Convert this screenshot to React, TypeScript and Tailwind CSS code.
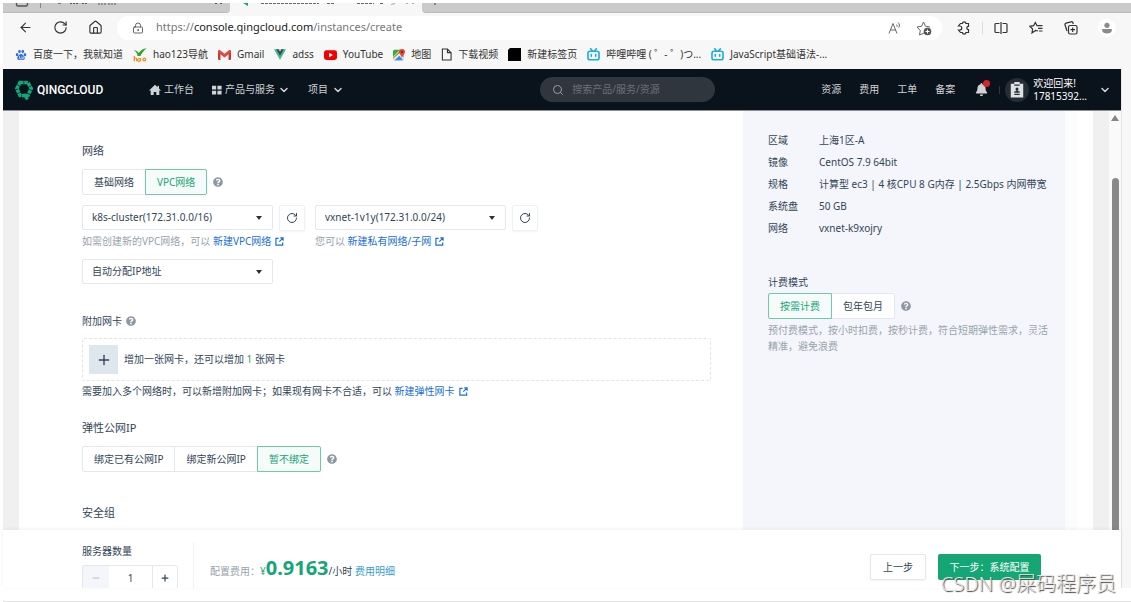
import { type ReactNode } from "react";
import {
  ArrowLeft,
  ChevronDown,
  House,
  LockKeyhole,
  Minus,
  Plus,
  RotateCw,
  Search,
} from "lucide-react";
import { FaBell, FaQuestionCircle } from "react-icons/fa";

const focus = "outline-none focus-visible:ring-1 focus-visible:ring-[#15a675]";

const BaiduIcon = () => (
  <svg viewBox="0 0 16 16" className="size-3" fill="#2f6fe4">
    <ellipse cx="2.8" cy="7.6" rx="1.7" ry="2.2" />
    <ellipse cx="6" cy="3.2" rx="1.7" ry="2.3" />
    <ellipse cx="10.4" cy="3.2" rx="1.7" ry="2.3" />
    <ellipse cx="13.3" cy="7.6" rx="1.7" ry="2.2" />
    <path d="M8 6.8c2 0 2.8 1.8 4 3 1.6 1.6 1.4 4.7-1 4.9-1.2 0-1.9-.3-3-.3s-1.8.3-3 .3c-2.400-.2-2.600-3.300-1-4.900 1.200-1.200 2-3 4-3z" />
    <path d="M6 9.5v3.200h1.700M9.200 10v2.700H11V10" fill="none" stroke="#fff" strokeWidth=".9" />
  </svg>
);

const HaoIcon = () => (
  <svg viewBox="0 0 16 16" className="size-[14px]">
    <path d="M1 2.500c2.500 0 4.500 1.300 5.600 3.300C8.500 2.500 11.500 .5 15.500 .2 13 2 10.500 5 8.500 9H5.200C4.800 5.800 3.200 3.800 1 2.500z" fill="#2fa52c" />
    <path
      d="M1.500 9v6M1.500 12.200c1-1.200 2.700-1 2.700.6V15M8.600 11.500V15M14.500 13.200a1.600 1.600 0 1 1-3.200 0 1.600 1.600 0 0 1 3.200 0M8.500 13.200a1.600 1.600 0 1 1-3.100 0 1.600 1.600 0 0 1 3.100 0"
      fill="none"
      stroke="#f08a24"
      strokeWidth="1.400"
    />
  </svg>
);

const GmailIcon = () => (
  <svg viewBox="0 0 16 12" className="h-[10px] w-[13px]">
    <path d="M0 1h3v11H1a1 1 0 0 1-1-1z" fill="#c5372c" />
    <path d="M13 1h3v10a1 1 0 0 1-1 1h-2z" fill="#c5372c" />
    <path d="M0 1.500C0 0 1.800-.5 3 .5l5 4 5-4c1.200-1 3-.5 3 1V3L8 9 0 3z" fill="#e2483d" />
  </svg>
);

const VueIcon = () => (
  <svg viewBox="0 0 16 14" className="h-[11px] w-3">
    <path d="M0 0h16L8 14z" fill="#41b883" />
    <path d="M3.200 0h9.600L8 8.500z" fill="#35495e" />
    <path d="M6.200 0h3.600L8 3z" fill="#f7f7f7" />
  </svg>
);

const YoutubeIcon = () => (
  <svg viewBox="0 0 16 12" className="h-[10px] w-[13px]">
    <rect width="16" height="12" rx="3" fill="#f00000" />
    <path d="M6.300 3.300v5.400L11 6z" fill="#fff" />
  </svg>
);

const MapIcon = () => (
  <svg viewBox="0 0 16 16" className="size-3">
    <rect x="0" y="1" width="14" height="14" rx="2" fill="#34a853" />
    <path d="M0 13 9 5l5 6v2a2 2 0 0 1-2 2H2a2 2 0 0 1-2-2z" fill="#e8e8e8" />
    <path d="M2 15 8.500 9l5 6z" fill="#4285f4" />
    <path d="m0 10 8-8h2L0 12z" fill="#fbcf3b" />
    <path d="M12 0a4 4 0 0 1 4 4c0 2.500-3 3.800-4 8-1-4.200-4-5.500-4-8a4 4 0 0 1 4-4z" fill="#e94235" />
    <circle cx="12" cy="4" r="1.300" fill="#8a1d15" />
  </svg>
);

const PageIcon = () => (
  <svg viewBox="0 0 12 14" className="h-[13px] w-[11px]" fill="none" stroke="#333" strokeWidth="1.200">
    <path d="M1.500 1H7l4 4v8H1.500zM7 1v4h4" />
  </svg>
);

const BlackIcon = () => (
  <svg viewBox="0 0 13 13" className="size-[13px]">
    <path d="M2 0h11v13H0V2z" fill="#000" />
  </svg>
);

const BiliIcon = () => (
  <svg viewBox="0 0 16 16" className="size-[13px]" fill="none" stroke="#1fade0" strokeWidth="2" strokeLinecap="round">
    <rect x="1.200" y="4" width="13.600" height="10.500" rx="2.500" />
    <path d="m4.500 1 2 2.500M11.500 1l-2 2.500M5.300 8v2M10.700 8v2" />
  </svg>
);

const QingLogo = () => (
  <svg viewBox="0 0 18 22" className="h-[22px] w-[18px]" fill="none" stroke="#12a678" strokeWidth="3.600">
    <path d="m5 3.500 8 0 3.200 6L13 16.500H5L1.800 9.500z" strokeDasharray="3.600 .6" />
    <path d="m9 15 3.500 5.500" strokeWidth="3.200" />
  </svg>
);

const ExternalIcon = () => (
  <svg viewBox="0 0 10 10" className="size-[9px]" fill="none" stroke="currentColor" strokeWidth="1.300">
    <path d="M4 1.500H1v7.500h7.500V6M5.800 1H9v3.200M9 1 4.800 5.200" />
  </svg>
);

const bookmarks = [
  { label: "百度一下，我就知道", icon: <BaiduIcon /> },
  { label: "hao123导航", icon: <HaoIcon /> },
  { label: "Gmail", icon: <GmailIcon /> },
  { label: "adss", icon: <VueIcon /> },
  { label: "YouTube", icon: <YoutubeIcon /> },
  { label: "地图", icon: <MapIcon /> },
  { label: "下载视频", icon: <PageIcon /> },
  { label: "新建标签页", icon: <BlackIcon /> },
  { label: "哔哩哔哩 ( ゜- ゜)つ...", icon: <BiliIcon /> },
  { label: "JavaScript基础语法-...", icon: <BiliIcon /> },
];

const summary = [
  { label: "区域", value: "上海1区-A" },
  { label: "镜像", value: "CentOS 7.9 64bit" },
  { label: "规格", value: "计算型 ec3 | 4 核CPU 8 G内存 | 2.5Gbps 内网带宽" },
  { label: "系统盘", value: "50 GB" },
  { label: "网络", value: "vxnet-k9xojry" },
];

// only the lower edge of the tab strip is in view
const TabStrip = () => (
  <div className="flex h-[10px] overflow-hidden bg-[#f7f7f7]">
    <div className="w-[227px] rounded-br-sm border-b border-[#bbb] bg-[#cacaca]">
      <svg viewBox="0 0 227 9" className="h-[9px] w-[227px]" fill="none" stroke="#555">
        <path d="M13.500 0v1.500a1.500 1.500 0 0 0 1.500 1.500h8a1.500 1.500 0 0 0 1.500-1.500V0" strokeWidth="1.400" />
        <path d="M37.500 0v5" stroke="#888" />
        <path d="M67 .5h9M79 .5h5M95 1h8M105 1h9M212 .5h2M217 .5h2" strokeDasharray="2 1" />
        <path d="M55 .5h3" stroke="#3b82d8" />
      </svg>
    </div>
    <div className="w-[192px]">
      <svg viewBox="0 0 192 9" className="h-[9px] w-[192px]" fill="none" stroke="#666">
        <path d="M13 0h5v3z" fill="#12a678" stroke="none" />
        <path d="M31 .5h58M97 .5h7M127 .5h17M150 .5h3" strokeDasharray="3 1" />
        <path d="M161 1.500l4-1M176 .5h2M182 .5h2" stroke="#aaa" />
      </svg>
    </div>
    <div className="flex-1 rounded-bl-sm border-b border-[#bbb] bg-[#cacaca]">
      <svg viewBox="0 0 20 9" className="h-[9px] w-5" stroke="#444">
        <path d="M13 0v2" />
      </svg>
    </div>
  </div>
);

const Browser = () => (
  <div className="shrink-0 bg-[#f7f7f7] text-[#333]">
    <TabStrip />
    <div className="flex h-[29px] items-center pr-[15px] pl-[15px]">
      <div className="flex w-[99px] items-center gap-5">
        <button type="button" aria-label="后退" className={focus}>
          <ArrowLeft className="size-[15px]" strokeWidth={1.8} />
        </button>
        <button type="button" aria-label="刷新" className={focus}>
          <RotateCw className="size-[15px]" strokeWidth={1.8} />
        </button>
        <button type="button" aria-label="主页" className={focus}>
          <House className="size-[15px]" strokeWidth={1.8} />
        </button>
      </div>
      <div className="flex h-6 flex-1 items-center rounded-full bg-white pr-[10px] pl-[15px]">
        <LockKeyhole className="size-3 text-[#555]" strokeWidth={1.8} />
        <p className="ml-3 flex-1 text-[11px] text-[#777]">
          https://<span className="text-[#222]">console.qingcloud.com</span>/instances/create
        </p>
        <div className="flex items-center gap-[14px] text-[#666]">
          <svg viewBox="0 0 14 14" className="size-[14px]" fill="none" stroke="currentColor">
            <path d="m1 12.500 4-10 4 10M2.500 9h5M8.500 3.500c.8.700.8 1.600.4 2.500M10 1.500c1.600 1.400 1.800 3.500.8 5.200" />
          </svg>
          <svg viewBox="0 0 16 16" className="size-4" fill="none" stroke="currentColor">
            <path d="M8 13 3.500 15l.8-4.500L1 7l4.500-.7L7.500 2l2 4.300 4.500.7" />
            <circle cx="11.500" cy="11.500" r="3.800" fill="#555" stroke="none" />
            <path d="M11.500 9.500v4M9.500 11.500h4" stroke="#fff" />
          </svg>
        </div>
      </div>
      <div className="ml-[15px] flex items-center text-[#333]">
        <svg viewBox="0 0 14 14" className="size-[14px]" fill="none" stroke="currentColor" strokeWidth="1.200">
          <path d="M3.500 2.500h2a1.700 1.700 0 0 1 3.400 0h2.600v2.800a1.700 1.700 0 0 0 0 3.400v2.800H8.900a1.700 1.700 0 0 1-3.400 0h-2L1.500 9h1.300a2 2 0 0 0 0-4H1.500z" />
        </svg>
        <span className="mx-[11px] h-3 w-px bg-[#ddd]" />
        <svg viewBox="0 0 14 14" className="size-[14px]" fill="none" stroke="currentColor" strokeWidth="1.200">
          <path d="M5.500 2.500H2a1 1 0 0 0-1 1v7a1 1 0 0 0 1 1h3.500M8.500 2.500H12a1 1 0 0 1 1 1v7a1 1 0 0 1-1 1H8.500M7 1v12" />
        </svg>
        <svg viewBox="0 0 14 14" className="ml-[21px] size-[14px]" fill="none" stroke="currentColor" strokeWidth="1.200">
          <path d="m9 10-2.500-.5L3 12l.6-4L1 5.300l3.600-.6L6.300 1.500 8 4.700h5.500M9 7.300h4.500M10 10h3.500" />
        </svg>
        <svg viewBox="0 0 14 14" className="ml-[21px] size-[14px]" fill="none" stroke="currentColor" strokeWidth="1.200">
          <rect x="4.500" y="4.500" width="8.500" height="8.500" rx="1.500" />
          <path d="M8.700 6.500v4.500M6.500 8.700H11M3 10 1 3.800a1.500 1.500 0 0 1 1-1.700L7 .8a1.500 1.500 0 0 1 1.900 1L9.300 3" />
        </svg>
        <span className="ml-5 flex size-[18px] items-center justify-center rounded-full bg-white">
          <svg viewBox="0 0 12 12" className="size-3" fill="#8a8a8a">
            <circle cx="6" cy="3.300" r="2.600" />
            <path d="M1.200 7h9.600v1.500c0 4-9.600 4-9.600 0z" />
          </svg>
        </span>
      </div>
    </div>
    <nav className="flex h-[27px] items-center gap-[10px] pb-[2px] pl-3">
      {bookmarks.map((item) => (
        <a key={item.label} href="#" className="flex items-center gap-[6px] text-[10px] whitespace-nowrap">
          {item.icon}
          {item.label}
        </a>
      ))}
    </nav>
  </div>
);

const Header = () => (
  <header className="flex h-[41px] shrink-0 items-center bg-[#0a121b] pr-[10px] pl-3 text-[10px] text-[#d0d3d6]">
    <a href="#" className="flex w-[134px] items-center gap-1 text-white">
      <QingLogo />
      <span className="font-[Roboto,sans-serif] text-xs leading-4 font-medium">QINGCLOUD</span>
    </a>
    <nav className="flex items-center gap-[18px]">
      <a href="#" className="flex items-center gap-[3px]">
        <svg viewBox="0 0 12 12" className="size-3" fill="currentColor">
          <path d="M6 .8 0 6.500h1.700V11h3V8h2.600v3h3V6.500H12L10 4.600V1.800H8.600v1.500z" />
        </svg>
        工作台
      </a>
      <a href="#" className="flex items-center gap-[3px]">
        <svg viewBox="0 0 12 12" className="size-[10px]" fill="currentColor">
          <path d="M0 1h5v4.500H0zM6.500 1h5v4.500h-5zM0 7h5v4.500H0zM6.500 7h5v4.500h-5z" />
        </svg>
        产品与服务
        <ChevronDown className="size-3" strokeWidth={3} />
      </a>
      <a href="#" className="flex items-center gap-1">
        项目
        <ChevronDown className="size-3" strokeWidth={3} />
      </a>
    </nav>
    <label className="mr-[106px] ml-auto flex h-[25px] w-[175px] items-center gap-2 rounded-full bg-[#30363e] px-3 text-[#9a9ea4]">
      <Search className="size-3 shrink-0" />
      <input type="search" aria-label="搜索" placeholder="搜索产品/服务/资源" className="w-full bg-transparent outline-none placeholder:text-[#6b7178]" />
    </label>
    <nav className="flex items-center gap-[18px]">
      <a href="#">资源</a>
      <a href="#">费用</a>
      <a href="#">工单</a>
      <a href="#">备案</a>
    </nav>
    <button type="button" aria-label="通知" className="relative ml-5">
      <FaBell className="size-[13px]" />
      <span className="absolute -top-[3px] -right-[2px] size-[7px] rounded-full bg-[#d8232a]" />
    </button>
    <span className="mr-[5px] ml-[11px] h-2 w-px bg-[#30363e]" />
    <span className="flex size-6 items-center justify-center rounded-full bg-[#262d36]">
      <svg viewBox="0 0 14 18" className="h-4 w-[14px]" fill="#dfe1e3">
        <path d="M0 2h4V0h6v2h4v15.500H0z" />
        <path d="M4 3.500h6M4 14h6" stroke="#262d36" strokeWidth="1.500" />
        <circle cx="7" cy="8" r="1.700" fill="#262d36" />
        <path d="M6.200 9h1.600v1.500H10V12H4v-1.500h2.200z" fill="#262d36" />
      </svg>
    </span>
    <p className="ml-1 leading-[13px] text-white">
      欢迎回来!
      <br />
      17815392...
    </p>
    <ChevronDown className="ml-3 size-3" strokeWidth={3} />
  </header>
);

const Help = () => <FaQuestionCircle className="size-[10px] text-[#8d98a3]" />;

const Segmented = ({ name, items, active }: { name: string; items: string[]; active: string }) => (
  <div className="flex items-center gap-[6px]">
    <div className="flex">
      {items.map((item) => (
        <label
          key={item}
          className="-ml-px flex h-[26px] cursor-pointer items-center border border-[#e3e8ee] bg-white px-[11px] first:ml-0 first:rounded-l-xs last:rounded-r-xs has-checked:z-10 has-checked:border-[#6fc9aa] has-checked:bg-[#f5fbf9] has-checked:text-[#15a675]"
        >
          <input type="radio" name={name} defaultChecked={item === active} className="sr-only" />
          {item}
        </label>
      ))}
    </div>
    <Help />
  </div>
);

const Dropdown = ({ label, value }: { label: string; value: string }) => (
  <div className="relative w-[191px]">
    <select
      aria-label={label}
      className={`h-[25px] w-full appearance-none rounded-xs border border-[#e3e8ee] bg-white px-[9px] ${focus}`}
    >
      <option>{value}</option>
    </select>
    <svg viewBox="0 0 6 4" className="pointer-events-none absolute top-[11px] right-[11px] h-1 w-[6px]" fill="#25323f">
      <path d="M0 0h6L3 4z" />
    </svg>
  </div>
);

const Refresh = () => (
  <button
    type="button"
    aria-label="刷新"
    className="flex size-[26px] items-center justify-center rounded-xs border border-[#eef1f5] bg-white shadow-xs"
  >
    <RotateCw className="size-3" />
  </button>
);

const NewLink = ({ children }: { children: ReactNode }) => (
  <a href="#" className="inline-flex items-center gap-1 text-[#1a6fd8]">
    {children}
    <ExternalIcon />
  </a>
);

const NetworkForm = () => (
  <main className="flex-1 overflow-hidden bg-white pt-[31px] pl-[63px]">
    <h2 className="text-[11px] leading-[18px]">网络</h2>
    <div className="mt-[9px]">
      <Segmented name="network" items={["基础网络", "VPC网络"]} active="VPC网络" />
    </div>
    <div className="mt-[10px] flex gap-[10px]">
      <div>
        <div className="flex gap-[6px]">
          <Dropdown label="VPC网络" value="k8s-cluster(172.31.0.0/16)" />
          <Refresh />
        </div>
        <p className="mt-px leading-[18px] whitespace-nowrap text-[#98a3ae]">
          如需创建新的VPC网络，可以 <NewLink>新建VPC网络</NewLink>
        </p>
      </div>
      <div>
        <div className="flex gap-[6px]">
          <Dropdown label="私有网络" value="vxnet-1v1y(172.31.0.0/24)" />
          <Refresh />
        </div>
        <p className="mt-px leading-[18px] whitespace-nowrap text-[#98a3ae]">
          您可以 <NewLink>新建私有网络/子网</NewLink>
        </p>
      </div>
    </div>
    <div className="mt-[9px]">
      <Dropdown label="IP地址" value="自动分配IP地址" />
    </div>
    <h3 className="mt-7 flex items-center gap-1 leading-[18px]">
      附加网卡 <Help />
    </h3>
    <div className="mt-2 mr-8 flex h-[43px] items-center gap-[6px] rounded-xs border border-dashed border-[#dfe5ec] px-[6px]">
      <button type="button" aria-label="增加网卡" className="flex size-[29px] items-center justify-center bg-[#dfe7ee]">
        <Plus className="size-4" />
      </button>
      <p>
        增加一张网卡，还可以增加 <span className="text-[#15a675]">1</span> 张网卡
      </p>
    </div>
    <p className="mt-px leading-[18px]">
      需要加入多个网络时，可以新增附加网卡；如果现有网卡不合适，可以 <NewLink>新建弹性网卡</NewLink>
    </p>
    <h2 className="mt-[19px] text-[11px] leading-[18px]">弹性公网IP</h2>
    <div className="mt-[9px]">
      <Segmented name="eip" items={["绑定已有公网IP", "绑定新公网IP", "暂不绑定"]} active="暂不绑定" />
    </div>
    <h2 className="mt-8 text-[11px] leading-[18px]">安全组</h2>
  </main>
);

const Sidebar = () => (
  <aside className="w-[322px] shrink-0 bg-[#f4f6fb] pt-5 pr-4 pl-[25px]">
    <dl className="grid grid-cols-[51px_1fr] gap-y-1 leading-[18px]">
      {summary.map((row) => (
        <div key={row.label} className="contents">
          <dt>{row.label}</dt>
          <dd className="whitespace-nowrap">{row.value}</dd>
        </div>
      ))}
    </dl>
    <h3 className="mt-9 mb-[2px] leading-[18px]">计费模式</h3>
    <Segmented name="billing" items={["按需计费", "包年包月"]} active="按需计费" />
    <p className="mt-[3px] leading-4 text-[#98a3ae]">
      预付费模式，按小时扣费，按秒计费，符合短期弹性需求，灵活精准，避免浪费
    </p>
  </aside>
);

const Footer = () => (
  <footer className="z-10 flex h-[58px] shrink-0 overflow-hidden bg-white pt-3 pr-20 pl-[79px] text-[10px] shadow-[0_-1px_4px_rgba(0,0,0,0.06)]">
    <div className="w-[112px] border-r border-[#edf2f5]">
      <label htmlFor="count" className="block leading-[18px]">服务器数量</label>
      <div className="mt-[5px] flex h-[26px] w-24 rounded-xs border border-[#e3e8ee]">
        <button type="button" aria-label="减少" className="flex w-[26px] items-center justify-center bg-[#f4f6fb] text-[#a5afb9]">
          <Minus className="size-[10px]" />
        </button>
        <input id="count" defaultValue="1" className="w-11 border-r border-[#e3e8ee] text-center outline-none" />
        <button type="button" aria-label="增加" className="flex flex-1 items-center justify-center">
          <Plus className="size-[10px]" strokeWidth={3} />
        </button>
      </div>
    </div>
    <p className="ml-4 pt-[14px] leading-6 text-[#98a3ae]">
      配置费用：
      <span className="text-[#15a675]">
        ¥<b className="text-xl leading-6">0.9163</b>
      </span>
      <span className="text-[#324558]">/小时</span>{" "}
      <a href="#" className="text-[#329dce]">费用明细</a>
    </p>
    <div className="ml-auto flex gap-3 pt-3">
      <button type="button" className="h-[26px] rounded-xs border border-[#e3e8ee] px-3 shadow-xs">
        上一步
      </button>
      <button type="button" className="h-[26px] w-[103px] rounded-xs bg-[#15a675] text-white">
        下一步：系统配置
      </button>
    </div>
  </footer>
);

const App = () => {
  return (
    <div className="relative flex h-screen flex-col overflow-hidden bg-white pt-[3px] pl-[3px] font-['Noto_Sans','Noto_Sans_CJK_SC',sans-serif] text-[10px] text-[#324558]">
      <Browser />
      <div className="flex min-h-0 flex-1 bg-[#f7f7f7]">
        <div className="flex min-w-0 flex-1 flex-col">
          <Header />
          <div className="flex min-h-0 flex-1 overflow-hidden border-t border-[#8d9096] bg-[#f0f0f0] pl-4">
            <NetworkForm />
            <Sidebar />
            <div className="w-3 shrink-0 bg-[#fcfcfd]" />
            <div className="w-4 shrink-0 bg-white" />
            <div className="w-4 shrink-0" />
            <div className="flex w-3 shrink-0 flex-col items-center bg-[#fafafa] pt-1">
              <svg viewBox="0 0 8 6" className="h-[6px] w-2" fill="#858585">
                <path d="M4 0 8 6H0z" />
              </svg>
              <div className="mt-[57px] w-[7px] flex-1 rounded-t-full bg-[#898989]" />
            </div>
          </div>
          <Footer />
        </div>
        <div className="w-[10px] shrink-0 border-l border-[#e4e4e4]" />
      </div>
      <div className="h-[14px] shrink-0 border-b border-[#e2e2e2] bg-white" />
      <p className="pointer-events-none absolute right-[15px] bottom-1 z-20 text-xl leading-7 font-light text-[#e6e6e6] [text-shadow:1px_1px_1px_#444]">
        CSDN @屎码程序员
      </p>
    </div>
  );
};

export default App;
